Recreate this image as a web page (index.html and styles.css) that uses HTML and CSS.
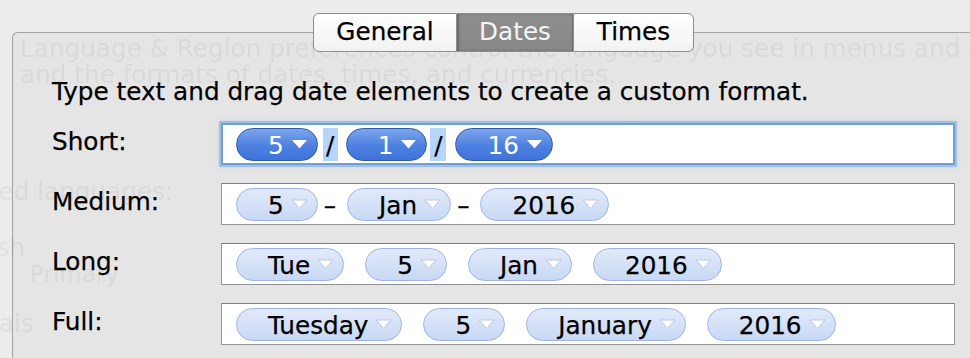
FILE: index.html
```html
<!DOCTYPE html>
<html lang="en">
<head>
<meta charset="utf-8">
<title>Dates</title>
<link rel="stylesheet" href="styles.css">
</head>
<body>
<div class="ghost" aria-hidden="true">
  <p class="g g1">Language &amp; Region preferences control the language you see in menus and dialogs,</p>
  <p class="g g2">and the formats of dates, times, and currencies.</p>
  <p class="g g3">Preferred languages:</p>
  <p class="g g4">English</p>
  <p class="g g5">Primary</p>
  <p class="g g6">Français</p>
</div>
<div class="window">
  <div class="tabs">
    <div class="tab first">General</div>
    <div class="tab sel">Dates</div>
    <div class="tab last">Times</div>
  </div>
  <div class="panel">
    <p class="intro">Type text and drag date elements to create a custom format.</p>
    <div class="rows">
      <div class="row">
        <div class="label">Short:</div>
        <div class="field focus">
          <span class="pill dark"><span class="t">5</span><svg viewBox="0 0 17 10"><polygon points="1,1 16,1 8.5,9.5"/></svg></span>
          <span class="hl"><span class="t">/</span></span>
          <span class="pill dark"><span class="t">1</span><svg viewBox="0 0 17 10"><polygon points="1,1 16,1 8.5,9.5"/></svg></span>
          <span class="hl hl2"><span class="t">/</span></span>
          <span class="pill dark"><span class="t">16</span><svg viewBox="0 0 17 10"><polygon points="1,1 16,1 8.5,9.5"/></svg></span>
        </div>
      </div>
      <div class="row">
        <div class="label">Medium:</div>
        <div class="field">
          <span class="pill"><span class="t">5</span><svg viewBox="0 0 17 10"><polygon points="1,1 16,1 8.5,9.5"/></svg></span>
          <span class="sep">–</span>
          <span class="pill"><span class="t">Jan</span><svg viewBox="0 0 17 10"><polygon points="1,1 16,1 8.5,9.5"/></svg></span>
          <span class="sep">–</span>
          <span class="pill"><span class="t">2016</span><svg viewBox="0 0 17 10"><polygon points="1,1 16,1 8.5,9.5"/></svg></span>
        </div>
      </div>
      <div class="row">
        <div class="label">Long:</div>
        <div class="field spaced">
          <span class="pill"><span class="t">Tue</span><svg viewBox="0 0 17 10"><polygon points="1,1 16,1 8.5,9.5"/></svg></span>
          <span class="pill"><span class="t">5</span><svg viewBox="0 0 17 10"><polygon points="1,1 16,1 8.5,9.5"/></svg></span>
          <span class="pill"><span class="t">Jan</span><svg viewBox="0 0 17 10"><polygon points="1,1 16,1 8.5,9.5"/></svg></span>
          <span class="pill"><span class="t">2016</span><svg viewBox="0 0 17 10"><polygon points="1,1 16,1 8.5,9.5"/></svg></span>
        </div>
      </div>
      <div class="row">
        <div class="label">Full:</div>
        <div class="field spaced">
          <span class="pill"><span class="t">Tuesday</span><svg viewBox="0 0 17 10"><polygon points="1,1 16,1 8.5,9.5"/></svg></span>
          <span class="pill"><span class="t">5</span><svg viewBox="0 0 17 10"><polygon points="1,1 16,1 8.5,9.5"/></svg></span>
          <span class="pill"><span class="t">January</span><svg viewBox="0 0 17 10"><polygon points="1,1 16,1 8.5,9.5"/></svg></span>
          <span class="pill"><span class="t">2016</span><svg viewBox="0 0 17 10"><polygon points="1,1 16,1 8.5,9.5"/></svg></span>
        </div>
      </div>
    </div>
  </div>
</div>
</body>
</html>
```

FILE: styles.css
```css
html, body {
  margin: 0;
  padding: 0;
}
body {
  width: 970px;
  height: 358px;
  overflow: hidden;
  position: relative;
  background: #ececec;
  font-family: "DejaVu Sans", "Liberation Sans", sans-serif;
  font-size: 24.7px;
  color: #000;
}

/* faded view showing through */
.ghost {
  position: absolute;
  inset: 0;
  z-index: 1;
  overflow: hidden;
  pointer-events: none;
  filter: blur(0.6px);
}
.g {
  position: absolute;
  margin: 0;
  line-height: 30px;
  white-space: nowrap;
  color: rgba(0, 0, 0, 0.05);
}
.g1 { left: 20px; top: 33.5px; }
.g2 { left: 20px; top: 59.5px; }
.g3 { left: -84px; top: 176.5px; }
.g4 { left: -64px; top: 232.5px; }
.g5 { left: 30px; top: 259px; font-size: 23px; }
.g6 { left: -68px; top: 308.5px; }

.window {
  padding-top: 13px;
}

/* segmented tabs */
.tabs {
  display: flex;
  margin-left: 313px;
  height: 39px;
  position: relative;
  z-index: 3;
}
.tab {
  box-sizing: border-box;
  height: 39px;
  display: flex;
  align-items: center;
  justify-content: center;
  border: 1px solid #8e8e8e;
  background: linear-gradient(#ffffff, #f2f2f2);
  line-height: 1;
  -webkit-text-stroke: 0.25px currentColor;
}
.tab.first {
  width: 144px;
  border-radius: 6px 0 0 6px;
}
.tab.sel {
  width: 116px;
  border-left: 0;
  border-right: 0;
  background: linear-gradient(#8e8e8e, #878787);
  color: #f4f4f4;
  -webkit-text-stroke: 0;
  box-shadow: inset 2px 0 2px rgba(0, 0, 0, 0.25), inset -1px 0 1px rgba(0, 0, 0, 0.2);
}
.tab.last {
  width: 121px;
  border-radius: 0 6px 6px 0;
}

/* content panel */
.panel {
  box-sizing: border-box;
  margin-top: -20px;
  margin-left: 12px;
  height: 326px;
  border: 1px solid #a3a3a3;
  border-right: 0;
  border-bottom: 0;
  border-top-left-radius: 6px;
  background: #e5e5e5;
  padding: 43.5px 0 0 39px;
}
.intro {
  margin: 0;
  line-height: 30px;
  position: relative;
  z-index: 2;
  -webkit-text-stroke: 0.25px currentColor;
}
.rows {
  margin-top: 16.5px;
  display: flex;
  flex-direction: column;
  gap: 18px;
}
.row {
  display: flex;
  height: 42px;
  position: relative;
  z-index: 2;
}
.label {
  width: 169px;
  padding-top: 3.5px;
  line-height: 30px;
  -webkit-text-stroke: 0.25px currentColor;
}
.field {
  box-sizing: border-box;
  width: 734px;
  height: 42px;
  border: 1px solid #939393;
  border-top-color: #7f7f7f;
  background: #fff;
  display: flex;
  align-items: center;
  padding-left: 14px;
}
.field.focus {
  border: 2px solid #6f9fd8;
  padding-left: 13px;
  box-shadow: 0 0 0 2px rgba(130, 172, 222, 0.55), 0 0 4px 2px rgba(130, 172, 222, 0.35);
}
.field.spaced {
  gap: 21px;
}

/* date element tokens */
.pill {
  box-sizing: border-box;
  height: 33px;
  border-radius: 17px;
  display: flex;
  align-items: center;
  padding: 0 9px 0 31px;
  background: linear-gradient(#e2eafa, #c8d8f4);
  border: 1.5px solid #9db3ea;
  color: #000;
}
.pill .t {
  line-height: 26px;
  padding-top: 4px;
  -webkit-text-stroke: 0.25px currentColor;
}
.pill svg {
  width: 17px;
  height: 10px;
  margin-left: 7px;
  fill: #fff;
  stroke: #b7c6e8;
  stroke-width: 1;
}
.pill.dark {
  background: linear-gradient(#7ba5ec, #4d80e0 55%, #3f73da);
  border-color: #2e5ba8;
  color: #fff;
}
.pill.dark .t {
  -webkit-text-stroke: 0;
}
.pill.dark svg {
  stroke: none;
}
.sep {
  line-height: 26px;
  padding-top: 4px;
  margin: 0 11px 0 6px;
  -webkit-text-stroke: 0.25px currentColor;
}
.hl {
  width: 15px;
  height: 33px;
  margin: 0 8px 0 5px;
  background: #b5d5fd;
  display: flex;
  align-items: center;
  justify-content: center;
}
.hl2 {
  width: 16px;
  margin: 0 9px 0 3px;
}
.hl .t {
  line-height: 26px;
  padding-top: 4px;
  -webkit-text-stroke: 0.25px currentColor;
}
```
